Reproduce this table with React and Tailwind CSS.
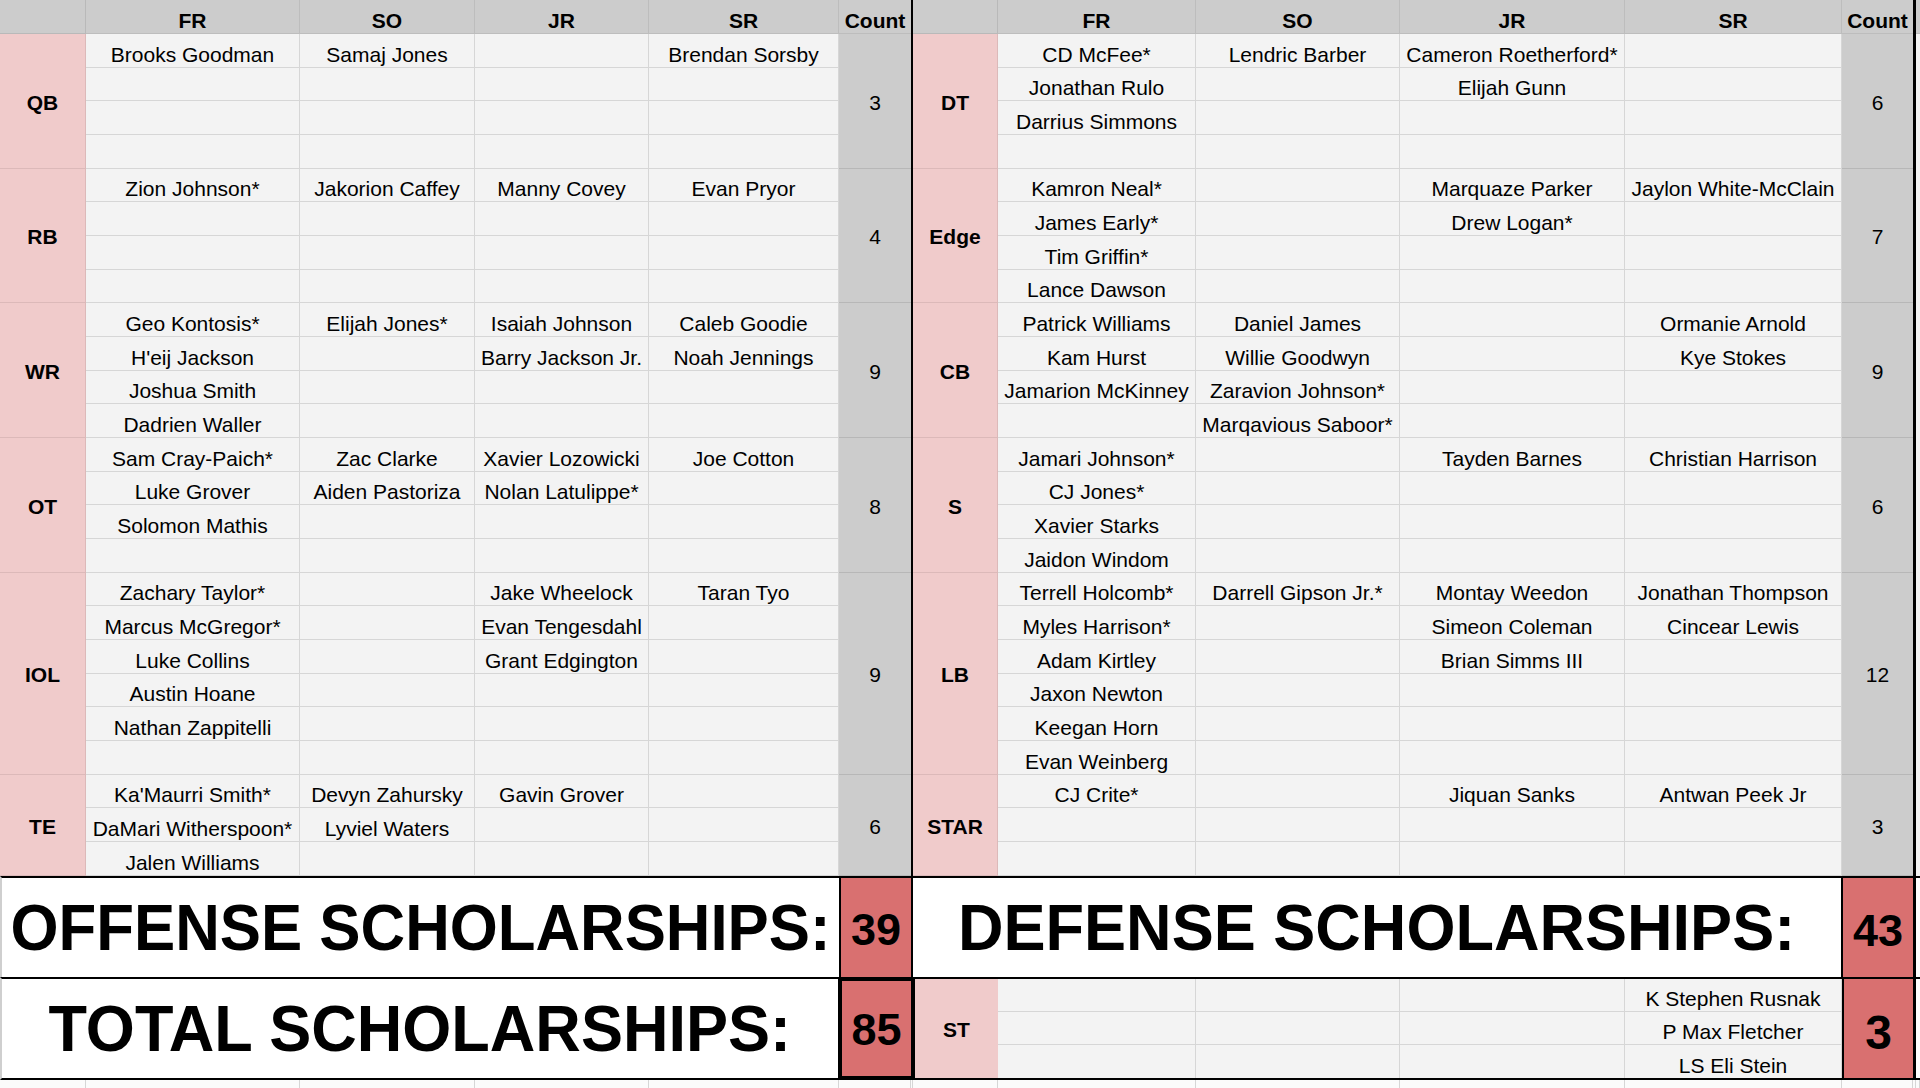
import React from "react";

const LW = ["w-[86px]", "w-[214px]", "w-[175px]", "w-[174px]", "w-[190px]", "w-[72px]"];
const RW = ["w-[85px]", "w-[198px]", "w-[204px]", "w-[225px]", "w-[217px]", "w-[71px]"];

const OFFENSE = [
  { pos: "QB", count: 3, rows: [
    ["Brooks Goodman", "Samaj Jones", "", "Brendan Sorsby"],
    ["", "", "", ""], ["", "", "", ""], ["", "", "", ""],
  ]},
  { pos: "RB", count: 4, rows: [
    ["Zion Johnson*", "Jakorion Caffey", "Manny Covey", "Evan Pryor"],
    ["", "", "", ""], ["", "", "", ""], ["", "", "", ""],
  ]},
  { pos: "WR", count: 9, rows: [
    ["Geo Kontosis*", "Elijah Jones*", "Isaiah Johnson", "Caleb Goodie"],
    ["H'eij Jackson", "", "Barry Jackson Jr.", "Noah Jennings"],
    ["Joshua Smith", "", "", ""],
    ["Dadrien Waller", "", "", ""],
  ]},
  { pos: "OT", count: 8, rows: [
    ["Sam Cray-Paich*", "Zac Clarke", "Xavier Lozowicki", "Joe Cotton"],
    ["Luke Grover", "Aiden Pastoriza", "Nolan Latulippe*", ""],
    ["Solomon Mathis", "", "", ""],
    ["", "", "", ""],
  ]},
  { pos: "IOL", count: 9, rows: [
    ["Zachary Taylor*", "", "Jake Wheelock", "Taran Tyo"],
    ["Marcus McGregor*", "", "Evan Tengesdahl", ""],
    ["Luke Collins", "", "Grant Edgington", ""],
    ["Austin Hoane", "", "", ""],
    ["Nathan Zappitelli", "", "", ""],
    ["", "", "", ""],
  ]},
  { pos: "TE", count: 6, rows: [
    ["Ka'Maurri Smith*", "Devyn Zahursky", "Gavin Grover", ""],
    ["DaMari Witherspoon*", "Lyviel Waters", "", ""],
    ["Jalen Williams", "", "", ""],
  ]},
];

const DEFENSE = [
  { pos: "DT", count: 6, rows: [
    ["CD McFee*", "Lendric Barber", "Cameron Roetherford*", ""],
    ["Jonathan Rulo", "", "Elijah Gunn", ""],
    ["Darrius Simmons", "", "", ""],
    ["", "", "", ""],
  ]},
  { pos: "Edge", count: 7, rows: [
    ["Kamron Neal*", "", "Marquaze Parker", "Jaylon White-McClain"],
    ["James Early*", "", "Drew Logan*", ""],
    ["Tim Griffin*", "", "", ""],
    ["Lance Dawson", "", "", ""],
  ]},
  { pos: "CB", count: 9, rows: [
    ["Patrick Williams", "Daniel James", "", "Ormanie Arnold"],
    ["Kam Hurst", "Willie Goodwyn", "", "Kye Stokes"],
    ["Jamarion McKinney", "Zaravion Johnson*", "", ""],
    ["", "Marqavious Saboor*", "", ""],
  ]},
  { pos: "S", count: 6, rows: [
    ["Jamari Johnson*", "", "Tayden Barnes", "Christian Harrison"],
    ["CJ Jones*", "", "", ""],
    ["Xavier Starks", "", "", ""],
    ["Jaidon Windom", "", "", ""],
  ]},
  { pos: "LB", count: 12, rows: [
    ["Terrell Holcomb*", "Darrell Gipson Jr.*", "Montay Weedon", "Jonathan Thompson"],
    ["Myles Harrison*", "", "Simeon Coleman", "Cincear Lewis"],
    ["Adam Kirtley", "", "Brian Simms III", ""],
    ["Jaxon Newton", "", "", ""],
    ["Keegan Horn", "", "", ""],
    ["Evan Weinberg", "", "", ""],
  ]},
  { pos: "STAR", count: 3, rows: [
    ["CJ Crite*", "", "Jiquan Sanks", "Antwan Peek Jr"],
    ["", "", "", ""], ["", "", "", ""],
  ]},
];

function Half({ w, groups }) {
  return (
    <div className="flex flex-col">
      <div className="flex h-[34px]">
        <div className={`${w[0]} shrink-0 bg-[#cccccc] border-r border-b border-[#b9b9b9]`} />
        {["FR", "SO", "JR", "SR"].map((t, i) => (
          <div
            key={t}
            className={`${w[i + 1]} shrink-0 bg-[#cccccc] border-r border-b border-[#bdbdbd] flex items-end justify-center font-bold leading-[24px]`}
          >
            {t}
          </div>
        ))}
        <div className={`${w[5]} shrink-0 bg-[#cccccc] border-b border-[#bdbdbd] flex items-end justify-center font-bold leading-[24px]`}>
          Count
        </div>
      </div>
      {groups.map((g) => (
        <div key={g.pos} className="flex">
          <div className={`${w[0]} shrink-0 bg-[#f0cbcb] border-r border-b border-[#dcb9b9] flex items-center justify-center font-bold pt-[3px]`}>
            {g.pos}
          </div>
          <div className="flex flex-col">
            {g.rows.map((r, ri) => (
              <div key={ri} className="flex h-[33.68px]">
                {r.map((n, i) => (
                  <div
                    key={i}
                    className={`${w[i + 1]} shrink-0 bg-[#f3f3f3] border-r border-b border-[#d6d6d6] flex items-end justify-center leading-[24px] whitespace-nowrap`}
                  >
                    {n}
                  </div>
                ))}
              </div>
            ))}
          </div>
          <div className={`${w[5]} shrink-0 bg-[#cccccc] border-b border-[#b7b7b7] flex items-center justify-center pt-[3px]`}>
            {g.count}
          </div>
        </div>
      ))}
    </div>
  );
}

function RightStrip() {
  return (
    <div className="flex flex-col w-[4px] shrink-0">
      <div className="h-[34px] bg-[#cccccc] border-b border-[#bdbdbd]" />
      <div className="flex-1 bg-[#f3f3f3]" />
    </div>
  );
}

export default function App() {
  const ST = ["K Stephen Rusnak", "P Max Fletcher", "LS Eli Stein"];
  const bottomCols = [
    "w-[86px]", "w-[214px]", "w-[175px]", "w-[174px]", "w-[190px]", "w-[72px]", "w-[2px]",
    "w-[85px]", "w-[198px]", "w-[204px]", "w-[225px]", "w-[217px]", "w-[71px]", "w-[3px]", "w-[4px]",
  ];
  return (
    <div className="w-[1920px] h-[1088px] overflow-hidden bg-white text-black text-[21px] font-['Liberation_Sans',Arial,sans-serif]">
      <div className="flex h-[876px]">
        <Half w={LW} groups={OFFENSE} />
        <div className="w-[2px] shrink-0 bg-black" />
        <Half w={RW} groups={DEFENSE} />
        <div className="w-[3px] shrink-0 bg-black" />
        <RightStrip />
      </div>

      {/* Offense / Defense totals */}
      <div className="flex h-[101px]">
        <div className="w-[839px] shrink-0 bg-white border-t-2 border-black flex items-center justify-center border-l-2 border-l-[#cfcfcf]">
          <span className="inline-block font-bold text-[65px] leading-none scale-x-[0.95] whitespace-nowrap">OFFENSE SCHOLARSHIPS:</span>
        </div>
        <div className="w-[72px] shrink-0 bg-[#d97070] border-t-2 border-l-2 border-black flex items-center justify-center font-bold text-[45px] leading-none pt-[4px]">
          39
        </div>
        <div className="w-[2px] shrink-0 bg-black" />
        <div className="w-[928px] shrink-0 bg-white border-t-2 border-black flex items-center justify-center">
          <span className="inline-block font-bold text-[65px] leading-none scale-x-[0.97] whitespace-nowrap">DEFENSE SCHOLARSHIPS:</span>
        </div>
        <div className="w-[72px] shrink-0 bg-[#d97070] border-t-2 border-l-2 border-black flex items-center justify-center font-bold text-[45px] leading-none pt-[6px]">
          43
        </div>
        <div className="w-[3px] shrink-0 bg-black" />
        <div className="w-[4px] shrink-0 bg-white border-t-2 border-black" />
      </div>

      {/* Total / ST */}
      <div className="flex h-[103px]">
        <div className="w-[838px] shrink-0 bg-white border-t-2 border-b-2 border-black flex items-center justify-center border-l-2 border-l-[#cfcfcf]">
          <span className="inline-block font-bold text-[65px] leading-none scale-x-[0.97] whitespace-nowrap">TOTAL SCHOLARSHIPS:</span>
        </div>
        <div className="w-[77px] shrink-0 bg-[#d97070] border-4 border-black flex items-center justify-center font-bold text-[45px] leading-none pt-[2px]">
          85
        </div>
        <div className="w-[83px] shrink-0 bg-[#f0cbcb] border-t-2 border-b-2 border-black flex items-center justify-center font-bold pt-[3px]">
          ST
        </div>
        <div className="flex flex-col border-t-2 border-b-2 border-black">
          {ST.map((n, ri) => (
            <div key={ri} className="flex flex-1">
              {["w-[198px]", "w-[204px]", "w-[225px]", "w-[217px]"].map((cw, i) => (
                <div
                  key={i}
                  className={`${cw} shrink-0 bg-[#f3f3f3] border-r border-[#d6d6d6] ${ri < 2 ? "border-b" : ""} flex items-end justify-center leading-[24px] whitespace-nowrap`}
                >
                  {i === 3 ? n : ""}
                </div>
              ))}
            </div>
          ))}
        </div>
        <div className="w-[71px] shrink-0 bg-[#d97070] border-t-2 border-b-2 border-l-2 border-black flex items-center justify-center font-bold text-[48px] leading-none pt-[8px]">
          3
        </div>
        <div className="w-[3px] shrink-0 bg-black" />
        <div className="w-[4px] shrink-0 bg-white border-t-2 border-b-2 border-black" />
      </div>

      {/* bottom strip */}
      <div className="flex h-[8px]">
        {bottomCols.map((c, i) => (
          <div key={i} className={`${c} shrink-0 bg-[#fbfbfb] border-r border-[#d6d6d6]`} />
        ))}
      </div>
    </div>
  );
}
